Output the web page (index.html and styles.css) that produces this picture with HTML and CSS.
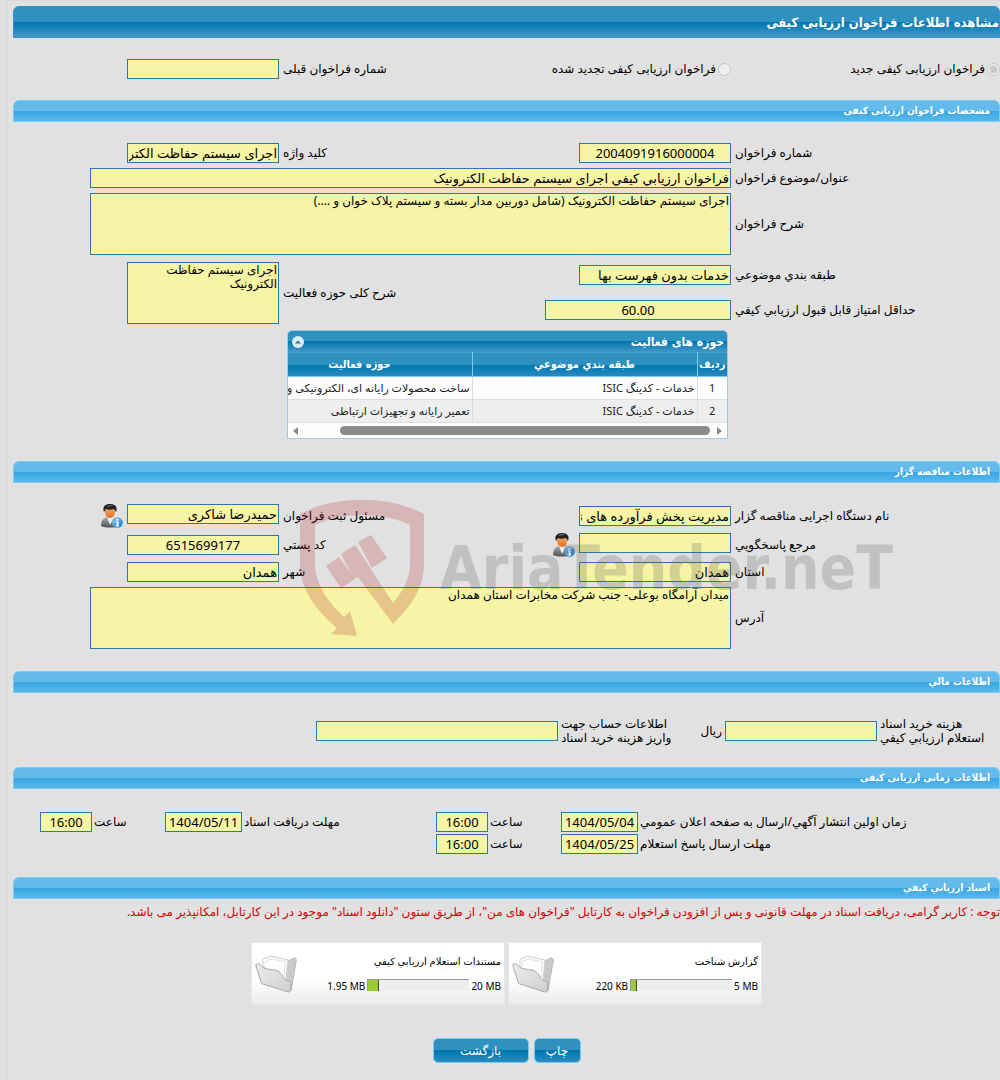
FILE: index.html
```
<!DOCTYPE html>
<html lang="fa" dir="rtl">
<head>
    <meta charset="utf-8">
    <title>مشاهده اطلاعات فراخوان ارزیابی کیفی</title>
    <link rel="stylesheet" href="styles.css">
</head>
<body>
<!-- shared icons -->
<svg class="defs" width="0" height="0">
    <defs>
        <linearGradient id="suit" x1="0" y1="0" x2="0" y2="1">
            <stop offset="0" stop-color="#a9abae"/>
            <stop offset="1" stop-color="#505357"/>
        </linearGradient>
        <linearGradient id="face" x1="0" y1="0" x2="0" y2="1">
            <stop offset="0" stop-color="#f7b26b"/>
            <stop offset="1" stop-color="#e2701f"/>
        </linearGradient>
        <linearGradient id="info" x1="0" y1="0" x2="1" y2="1">
            <stop offset="0" stop-color="#8fd0fa"/>
            <stop offset="1" stop-color="#1473c4"/>
        </linearGradient>
        <linearGradient id="folder" x1="0" y1="0" x2="1" y2="1">
            <stop offset="0" stop-color="#ececec"/>
            <stop offset="1" stop-color="#cfcfcf"/>
        </linearGradient>
    </defs>
    <symbol id="icon-user" viewBox="0 0 22 24">
        <path d="M0 22c0-5 2-8 6-9h6c4 1 6 4 6 9-4 2-14 2-18 0z" fill="url(#suit)"/>
        <path d="M6 13l3 8 4-8z" fill="#eee"/>
        <ellipse cx="9" cy="8" rx="5" ry="6" fill="url(#face)"/>
        <path d="M3 8C1 3 4 0 9 0s8 3 6 8c-1-1-1-2-2-3-3 1-6 1-8 0-1 1-1 2-2 3z" fill="#222"/>
        <path d="M5 3c2-2 5-2 8-1-3 0-5 0-8 1z" fill="#777"/>
        <circle cx="16.500" cy="18.500" r="5.300" fill="url(#info)"/>
        <path d="M15.500 15h2v1.500h-2zM15 17.500h2.500v4h.5v1h-3v-1h.7v-3H15z" fill="#fff"/>
    </symbol>
    <symbol id="icon-folder" viewBox="0 0 42 38">
        <path d="M20 15l13-9 6-3c2 0 3 2 2 4l-5 29z" fill="#c9c9c9" stroke="#b8b8b8"/>
        <path d="M8 12V4l8-3 17 4-2 20z" fill="#fafafa" stroke="#cfcfcf"/>
        <path d="M10 13l1-7 6-2 13 3-1 17z" fill="#fff" stroke="#e4e4e4"/>
        <path d="M1 9h3c2 0 2 3 5 4 5 2 10 1 14 3 5 3 5 8 8 9 2 2 5 1 5 3l-1 8c0 1-1 1-2 1L8 29c-1 0-2-1-2-2L1 11z" fill="url(#folder)" stroke="#a8a8a8"/>
    </symbol>
</svg>

<form class="page">
    <h1 class="page-title">مشاهده اطلاعات فراخوان ارزیابی کیفی</h1>

    <div class="form-grid call-type">
        <div class="choice">
            <input type="radio" id="type-new" name="type" checked disabled>
            <label for="type-new">فراخوان ارزیابی کیفی جدید</label>
        </div>
        <div class="choice">
            <input type="radio" id="type-renew" name="type" disabled>
            <label for="type-renew">فراخوان ارزیابی کیفی تجدید شده</label>
        </div>
        <label for="prev-no">شماره فراخوان قبلی</label>
        <input class="field" type="text" id="prev-no" readonly>
    </div>

    <section>
        <h2 class="section-title">مشخصات فراخوان ارزیابی کیفی</h2>
        <div class="form-grid section-body">
            <label for="call-no">شماره فراخوان</label>
            <input class="field number" type="text" id="call-no" value="2004091916000004" readonly>
            <label for="keyword">کلید واژه</label>
            <input class="field" type="text" id="keyword" value="اجرای سیستم حفاظت الکترونیک" readonly>

            <label for="subject">عنوان/موضوع فراخوان</label>
            <input class="field wide" type="text" id="subject" value="فراخوان ارزیابي کیفي اجرای سیستم حفاظت الکترونیک" readonly>

            <label for="desc">شرح فراخوان</label>
            <textarea class="field wide" id="desc" readonly>اجرای سیستم حفاظت الکترونیک (شامل دوربین مدار بسته و سیستم پلاک خوان و ....)</textarea>

            <label class="tall-row" for="category">طبقه بندي موضوعي</label>
            <input class="field" type="text" id="category" value="خدمات بدون فهرست بها" readonly>
            <label class="two-rows" for="activity">شرح کلی حوزه فعالیت</label>
            <textarea class="field two-rows" id="activity" readonly>اجرای سیستم حفاظت الکترونیک</textarea>

            <label class="tall-row" for="min-score">حداقل امتیاز قابل قبول ارزیابي کیفي</label>
            <input class="field number full" type="text" id="min-score" value="60.00" readonly>

            <div class="activity-grid">
                <div class="grid-caption">
                    <span>حوزه های فعالیت</span>
                    <button type="button" class="collapse" aria-label="بستن">
                        <svg width="12" height="12" viewBox="0 0 12 12"><circle cx="6" cy="6" r="6" fill="#dcebf6"/><path d="M3 7.500L6 4.500l3 3z" fill="#3c6f91"/></svg>
                    </button>
                </div>
                <div class="grid-view">
                    <table>
                        <thead>
                            <tr><th class="col-row">ردیف</th><th class="col-text">طبقه بندي موضوعي</th><th class="col-text">حوزه فعالیت</th></tr>
                        </thead>
                        <tbody>
                            <tr><td class="index">1</td><td>خدمات - کدینگ ISIC</td><td>ساخت محصولات رایانه ای، الکترونیکی و نوری</td></tr>
                            <tr><td class="index">2</td><td>خدمات - کدینگ ISIC</td><td>تعمیر رایانه و تجهیزات ارتباطی</td></tr>
                        </tbody>
                    </table>
                </div>
                <div class="scrollbar">
                    <svg width="5" height="8" viewBox="0 0 5 8"><path d="M0 0l5 4-5 4z" fill="#8a8a8a"/></svg>
                    <div class="track"><div class="thumb"></div></div>
                    <svg width="5" height="8" viewBox="0 0 5 8"><path d="M5 0L0 4l5 4z" fill="#8a8a8a"/></svg>
                </div>
            </div>
        </div>
    </section>

    <section class="owner">
        <h2 class="section-title">اطلاعات مناقصه گزار</h2>
        <div class="form-grid section-body">
            <label for="org">نام دستگاه اجرایی مناقصه گزار</label>
            <input class="field" type="text" id="org" value="مدیریت پخش فرآورده های نفتی" readonly>
            <label for="officer">مسئول ثبت فراخوان</label>
            <div class="with-icon">
                <input class="field" type="text" id="officer" value="حمیدرضا شاکری" readonly>
                <svg width="22" height="24"><use href="#icon-user"/></svg>
            </div>

            <label for="contact">مرجع پاسخگویي</label>
            <div class="with-icon">
                <input class="field" type="text" id="contact" readonly>
                <svg width="22" height="24"><use href="#icon-user"/></svg>
            </div>
            <label for="zip">کد پستي</label>
            <input class="field number" type="text" id="zip" value="6515699177" readonly>

            <label for="province">استان</label>
            <input class="field" type="text" id="province" value="همدان" readonly>
            <label for="city">شهر</label>
            <input class="field" type="text" id="city" value="همدان" readonly>

            <label for="address">آدرس</label>
            <textarea class="field wide" id="address" readonly>میدان آرامگاه بوعلی- جنب شرکت مخابرات استان همدان</textarea>
        </div>
        <div class="watermark" dir="ltr">
            <svg width="126" height="138" viewBox="0 0 126 138" fill="#b5202c">
                <path d="M0 15C35-4 89-4 124 15v50c0 25-14 43-31 60L58 78l-4 2-13-25 14-9 15 22 2 4 21 32c10-12 17-24 17-39V26C85 13 40 13 15 26v39c0 20 13 38 29 53l6-6 7 25-26-2 6-6C15 110 0 90 0 65z"/>
                <path d="M26 67l13-9 16 22-14 9zM58 43l13-7 16 23-15 10z"/>
            </svg>
            <span>AriaTender.neT</span>
        </div>
    </section>

    <section>
        <h2 class="section-title">اطلاعات مالي</h2>
        <div class="finance">
            <label class="fee-label" for="fee">هزینه خرید اسناد<br>استعلام ارزیابي کیفي</label>
            <input class="field" type="text" id="fee" readonly>
            <span class="unit">ریال</span>
            <label class="account-label" for="account">اطلاعات حساب جهت<br>واریز هزینه خرید اسناد</label>
            <input class="field account" type="text" id="account" readonly>
        </div>
    </section>

    <section>
        <h2 class="section-title">اطلاعات زمانی ارزیابی کیفی</h2>
        <div class="times">
            <label for="publish-date">زمان اولین انتشار آگهي/ارسال به صفحه اعلان عمومي</label>
            <input class="field number" type="text" id="publish-date" value="1404/05/04" readonly>
            <label for="publish-time">ساعت</label>
            <input class="field number" type="text" id="publish-time" value="16:00" readonly>
            <label for="docs-date">مهلت دریافت اسناد</label>
            <input class="field number" type="text" id="docs-date" value="1404/05/11" readonly>
            <label for="docs-time">ساعت</label>
            <input class="field number" type="text" id="docs-time" value="16:00" readonly>

            <label class="new-row" for="reply-date">مهلت ارسال پاسخ استعلام</label>
            <input class="field number" type="text" id="reply-date" value="1404/05/25" readonly>
            <label for="reply-time">ساعت</label>
            <input class="field number" type="text" id="reply-time" value="16:00" readonly>
        </div>
    </section>

    <section>
        <h2 class="section-title">اسناد ارزیابي کیفي</h2>
        <p class="notice">توجه : کاربر گرامی، دریافت اسناد در مهلت قانونی و پس از افزودن فراخوان به کارتابل "فراخوان های من"، از طریق ستون "دانلود اسناد" موجود در این کارتابل، امکانپذیر می باشد.</p>
        <div class="files">
            <div class="file">
                <div class="file-info">
                    <div class="file-name">گزارش شناخت</div>
                    <div class="usage" dir="ltr"><span>220 KB</span><div class="bar"><div class="fill" style="width: 6%"></div></div><span>5 MB</span></div>
                </div>
                <svg width="42" height="38"><use href="#icon-folder"/></svg>
            </div>
            <div class="file">
                <div class="file-info">
                    <div class="file-name">مستندات استعلام ارزیابي کیفي</div>
                    <div class="usage" dir="ltr"><span>1.95 MB</span><div class="bar"><div class="fill" style="width: 11%"></div></div><span>20 MB</span></div>
                </div>
                <svg width="42" height="38"><use href="#icon-folder"/></svg>
            </div>
        </div>
    </section>

    <div class="actions">
        <button type="button" class="btn">چاپ</button>
        <button type="button" class="btn btn-back">بازگشت</button>
    </div>
</form>
</body>
</html>
```
FILE: styles.css
```
* {
    box-sizing: border-box;
}
body {
    margin: 0;
    padding-left: 7px;
    background: #e1e1e1;
    color: #000;
    font-family: "Noto Sans", "DejaVu Sans", sans-serif;
    font-size: 12px;
    line-height: 14px;
    overflow-x: hidden;
}
input, textarea, button {
    font-family: inherit;
    color: inherit;
}
.defs {
    position: absolute;
}
.page {
    min-height: 100vh;
    padding: 5px 0 15px 5px;
    border-left: 1px solid #d9d9d9;
    border-top: 1px solid #d9d9d9;
}

/* headings */
.page-title,
.section-title,
.grid-caption,
th {
    font-family: "DejaVu Sans Condensed", "DejaVu Sans", sans-serif;
}
.page-title {
    height: 32px;
    margin: 0;
    border: 1px solid #2f8fd8;
    border-radius: 6px 6px 0 0;
    background: linear-gradient(#2f91c0 50%, #0076b0 50%, #4398c4);
    color: #fff;
    font-size: 13px;
    line-height: 32px;
}
.section-title {
    height: 22px;
    margin: 0;
    padding: 0 9px;
    border: 1px solid #74cdf5;
    border-radius: 6px 6px 0 0;
    background: linear-gradient(#64baea 50%, #37a5e1 50%, #5ab8ea);
    color: #fff;
    font-size: 10px;
    line-height: 20px;
}

/* label / field pairs, two to a row */
.form-grid {
    display: grid;
    grid-template-columns: 265fr 186fr 258fr 266fr;
    gap: 5px 4px;
    align-items: center;
}
.form-grid > label,
.times > label {
    text-align: left;
    white-space: nowrap;
}
.call-type {
    height: 62px;
}
.section-body {
    padding: 21px 0 22px;
}
.choice {
    display: flex;
    align-items: center;
    gap: 2px;
    white-space: nowrap;
}
.choice input {
    width: 13px;
    height: 13px;
    margin: 0;
}
.field {
    width: 152px;
    height: 20px;
    padding: 0 1px;
    border: 1px solid #2a7aa9;
    border-radius: 0;
    background: #f6f4a5;
    font-size: 13px;
    outline: none;
}
.number {
    text-align: center;
}
.full {
    width: 100%;
}
textarea.field {
    height: 62px;
    font-size: 12px;
    line-height: 14px;
    resize: none;
    overflow: hidden;
}
.wide {
    grid-column: span 3;
    width: 641px;
}
.tall-row {
    line-height: 30px;
}
.two-rows {
    grid-row: span 2;
}
.with-icon {
    display: flex;
    gap: 4px;
}

/* activity table */
.activity-grid {
    grid-column: 1 / -1;
    width: 441px;
    margin-right: 272px;
    border: 1px solid #a3c9e2;
    border-radius: 5px 5px 0 0;
    background: #fdfdfd;
    overflow: hidden;
}
.grid-caption {
    display: flex;
    justify-content: space-between;
    align-items: center;
    height: 21px;
    padding: 0 3px 0 4px;
    background: linear-gradient(#2f91c0 50%, #0076b0 50%, #4398c4);
    color: #fff;
    font-weight: bold;
}
.collapse {
    display: flex;
    padding: 0;
    border: none;
    background: none;
}
.grid-view {
    overflow: hidden;
}
table {
    width: 480px;
    table-layout: fixed;
    border-collapse: collapse;
    font-size: 11px;
    white-space: nowrap;
}
th {
    height: 24px;
    padding: 0;
    border-left: 1px solid #74cdf5;
    border-bottom: 1px solid #74cdf5;
    border-top: 1px solid #4a9fce;
    color: #fff;
}
thead tr {
    background: linear-gradient(#2f91c0 50%, #0076b0 50%, #2b8cbf);
}
.col-row {
    width: 30px;
}
.col-text {
    width: 225px;
}
td {
    height: 23px;
    padding: 0 2px;
    border-left: 1px solid #ddd;
    border-bottom: 1px solid #ddd;
    color: #222;
}
tbody tr:nth-child(even) {
    background: #eee;
}
.index {
    text-align: center;
}
.scrollbar {
    display: flex;
    align-items: center;
    gap: 6px;
    height: 15px;
    padding: 0 5px;
}
.track {
    flex: 1;
}
.thumb {
    width: 91%;
    height: 9px;
    margin-right: 1px;
    border-radius: 5px;
    background: #8a8a8a;
}

/* logo laid over the owner section */
.owner {
    position: relative;
}
.watermark {
    position: absolute;
    top: 38px;
    left: 287px;
    display: flex;
    align-items: center;
    gap: 14px;
    opacity: .22;
    pointer-events: none;
}
.watermark span {
    color: #555;
    font-family: "DejaVu Sans Condensed", sans-serif;
    font-size: 60px;
    font-weight: bold;
    line-height: 76px;
}

/* costs */
.finance {
    display: flex;
    align-items: center;
    gap: 3px;
    padding: 24px 0 22px;
    white-space: nowrap;
}
.finance label {
    text-align: left;
}
.fee-label {
    width: 120px;
}
.unit {
    width: 20px;
}
.account-label {
    width: 138px;
}
.account {
    width: 242px;
}

/* dates */
.times {
    display: grid;
    grid-template-columns: 360fr 77px 69fr 52px 190fr 77px 69fr 52px 25fr;
    gap: 2px;
    align-items: center;
    padding: 23px 0;
}
.times .field {
    width: 100%;
}
.new-row {
    grid-column: 1;
}

/* documents */
.notice {
    margin: 0;
    padding: 6px 0;
    color: #d90000;
    white-space: nowrap;
}
.files {
    display: flex;
    justify-content: center;
    gap: 3px;
    padding: 17px 0 33px;
}
.file {
    display: flex;
    align-items: center;
    justify-content: space-between;
    width: 254px;
    height: 63px;
    padding: 0 3px;
    border: 1px solid #e8e8e8;
    background: linear-gradient(#fff 60%, #ebebeb);
    font-size: 10px;
}
.file-info {
    display: flex;
    flex-direction: column;
    gap: 11px;
}
.usage {
    display: flex;
    justify-content: flex-end;
    gap: 2px;
}
.bar {
    width: 102px;
    height: 12px;
    border-top: 1px solid #999;
    border-left: 1px solid #999;
    background: #eee;
}
.fill {
    height: 100%;
    border-right: 1px solid #444;
    background: #9c3;
}

/* bottom buttons */
.actions {
    display: flex;
    justify-content: center;
    gap: 5px;
}
.btn {
    width: 47px;
    height: 25px;
    padding: 0;
    border: 1px solid #74cdf5;
    border-radius: 5px;
    background: linear-gradient(#2f91c0 50%, #0076b0 50%, #2b8cbf);
    color: #fff;
    font-size: 12px;
    cursor: pointer;
}
.btn-back {
    width: 96px;
}
```
